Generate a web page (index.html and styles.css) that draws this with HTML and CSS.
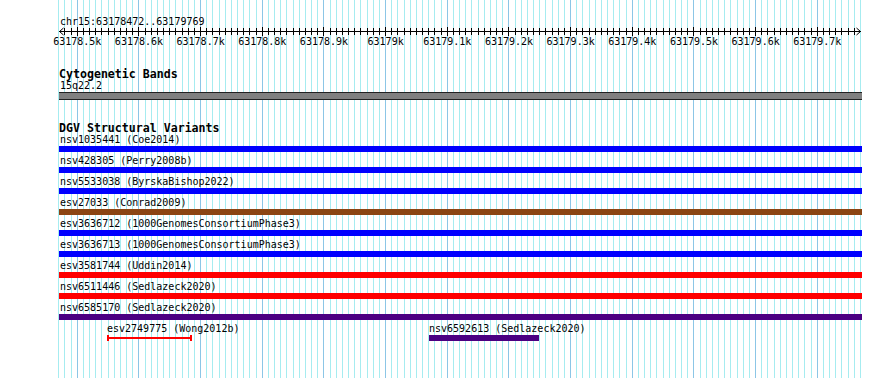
FILE: index.html
```html
<!DOCTYPE html>
<html lang="en">
<head>
  <meta charset="UTF-8" />
  <title>chr15:63178472..63179769</title>
  <link rel="stylesheet" href="styles.css">
</head>
<body>

<div class="browser">
  <svg class="grid" id="grid" width="890" height="378"></svg>

  <div class="view">
    <div class="ruler">
      <div class="location">chr15:63178472..63179769</div>
      <svg class="scale-axis" id="axis" width="890" height="9"></svg>
      <div class="scale-labels" id="scaleLabels"></div>
    </div>

    <section class="track band-track">
      <h2 class="track-title">Cytogenetic Bands</h2>
      <div class="feature-label">15q22.2</div>
      <div class="band"></div>
    </section>

    <section class="track dgv-track">
      <h2 class="track-title">DGV Structural Variants</h2>

      <div class="sv">
        <div class="feature-label">nsv1035441 (Coe2014)</div>
        <div class="bar gain"></div>
      </div>
      <div class="sv">
        <div class="feature-label">nsv428305 (Perry2008b)</div>
        <div class="bar gain"></div>
      </div>
      <div class="sv">
        <div class="feature-label">nsv5533038 (ByrskaBishop2022)</div>
        <div class="bar gain"></div>
      </div>
      <div class="sv">
        <div class="feature-label">esv27033 (Conrad2009)</div>
        <div class="bar gain-loss"></div>
      </div>
      <div class="sv">
        <div class="feature-label">esv3636712 (1000GenomesConsortiumPhase3)</div>
        <div class="bar gain"></div>
      </div>
      <div class="sv">
        <div class="feature-label">esv3636713 (1000GenomesConsortiumPhase3)</div>
        <div class="bar gain"></div>
      </div>
      <div class="sv">
        <div class="feature-label">esv3581744 (Uddin2014)</div>
        <div class="bar loss"></div>
      </div>
      <div class="sv">
        <div class="feature-label">nsv6511446 (Sedlazeck2020)</div>
        <div class="bar loss"></div>
      </div>
      <div class="sv">
        <div class="feature-label">nsv6585170 (Sedlazeck2020)</div>
        <div class="bar other"></div>
      </div>

      <div class="sv-row">
        <div class="sv-short" style="left: 48px; width: 85px;">
          <div class="feature-label">esv2749775 (Wong2012b)</div>
          <div class="span loss-span"></div>
        </div>
        <div class="sv-short" style="left: 370px; width: 110px;">
          <div class="feature-label">nsv6592613 (Sedlazeck2020)</div>
          <div class="bar other"></div>
        </div>
      </div>
    </section>
  </div>
</div>

<script src="script.js"></script>
</body>
</html>
```

FILE: styles.css
```css
body {
  margin: 0;
  font-family: "DejaVu Sans Mono", monospace;
  font-size: 10px;
  line-height: 11px;
  color: #000;
  background: #fff;
}

.browser {
  position: relative;
  width: 890px;
  height: 378px;
  overflow: hidden;
}

.grid {
  position: absolute;
  top: 0;
  left: 0;
}

.grid .minor {
  stroke: #a6ecf0;
}

.grid .major {
  stroke: #8cc6e6;
}

.view {
  position: relative;
}

.location {
  padding: 16px 0 0 60px;
  height: 11px;
  white-space: nowrap;
}

.scale-axis {
  display: block;
}

.scale-axis line,
.scale-axis path {
  stroke: #000;
  fill: none;
}

.scale-labels {
  position: relative;
  height: 11px;
}

.scale-label {
  position: absolute;
  top: 0;
  transform: translateX(-50%);
  white-space: nowrap;
}

.track {
  padding-left: 59px;
  width: 803px;
}

.track-title {
  margin: 0;
  font-size: 11.6px;
  line-height: 12px;
  font-weight: bold;
  white-space: nowrap;
}

.feature-label {
  height: 11px;
  padding-left: 1px;
  white-space: nowrap;
}

.band-track {
  margin-top: 21px;
}

.band {
  margin-top: 1px;
  height: 6px;
  background: #808080;
  border-top: 1px solid #222;
  border-bottom: 1px solid #222;
}

.dgv-track {
  margin-top: 22px;
}

.bar {
  margin-top: 1px;
  height: 6px;
}

.sv .bar {
  margin-bottom: 3px;
}

.gain { background: #0000ff; }
.gain-loss { background: #8b4513; }
.loss { background: #ff0000; }
.other { background: #4b0082; }

.sv-row {
  position: relative;
  height: 18px;
}

.sv-short {
  position: absolute;
  top: 0;
}

.sv-short .feature-label {
  padding-left: 0;
}

.span {
  position: relative;
  margin-top: 1px;
  height: 6px;
}

.loss-span {
  border-left: 2px solid #ff0000;
  border-right: 2px solid #ff0000;
}

.loss-span::after {
  content: "";
  position: absolute;
  left: 0;
  right: 0;
  top: 2px;
  height: 2px;
  background: #ff0000;
}
```

FILE: script.js
```js
const NS = 'http://www.w3.org/2000/svg';
const first = 63178470;
const last = 63179770;

// pixel x for a base position
const toX = bp => 77.3 + (bp - 63178500) * 0.61667;
const px = bp => Math.floor(toX(bp)) + 0.5;

function line(svg, x1, y1, x2, y2, cls) {
  const l = document.createElementNS(NS, 'line');
  l.setAttribute('x1', x1);
  l.setAttribute('y1', y1);
  l.setAttribute('x2', x2);
  l.setAttribute('y2', y2);
  if (cls) l.setAttribute('class', cls);
  l.setAttribute('shape-rendering', 'crispEdges');
  svg.appendChild(l);
}

const grid = document.getElementById('grid');
const axis = document.getElementById('axis');
const labels = document.getElementById('scaleLabels');

for (let bp = first; bp <= last; bp += 10) {
  const major = bp % 100 === 0;
  line(grid, px(bp), 0, px(bp), 378, major ? 'major' : 'minor');
  if (bp > 63178472 && bp < 63179769) {
    line(axis, px(bp), major ? 0 : 1, px(bp), major ? 9 : 8);
  }
  if (major && bp > 63178472 && bp < 63179769) {
    const label = document.createElement('div');
    label.className = 'scale-label';
    label.style.left = toX(bp) + 'px';
    label.textContent = (bp / 1000) + 'k';
    labels.appendChild(label);
  }
}

// axis line with arrow heads
line(axis, 59, 4.5, 861, 4.5);
const arrows = document.createElementNS(NS, 'path');
arrows.setAttribute('d', 'M63.5 1 L59.5 4.5 L63.5 8 M856.5 1 L860.5 4.5 L856.5 8');
axis.appendChild(arrows);
```
